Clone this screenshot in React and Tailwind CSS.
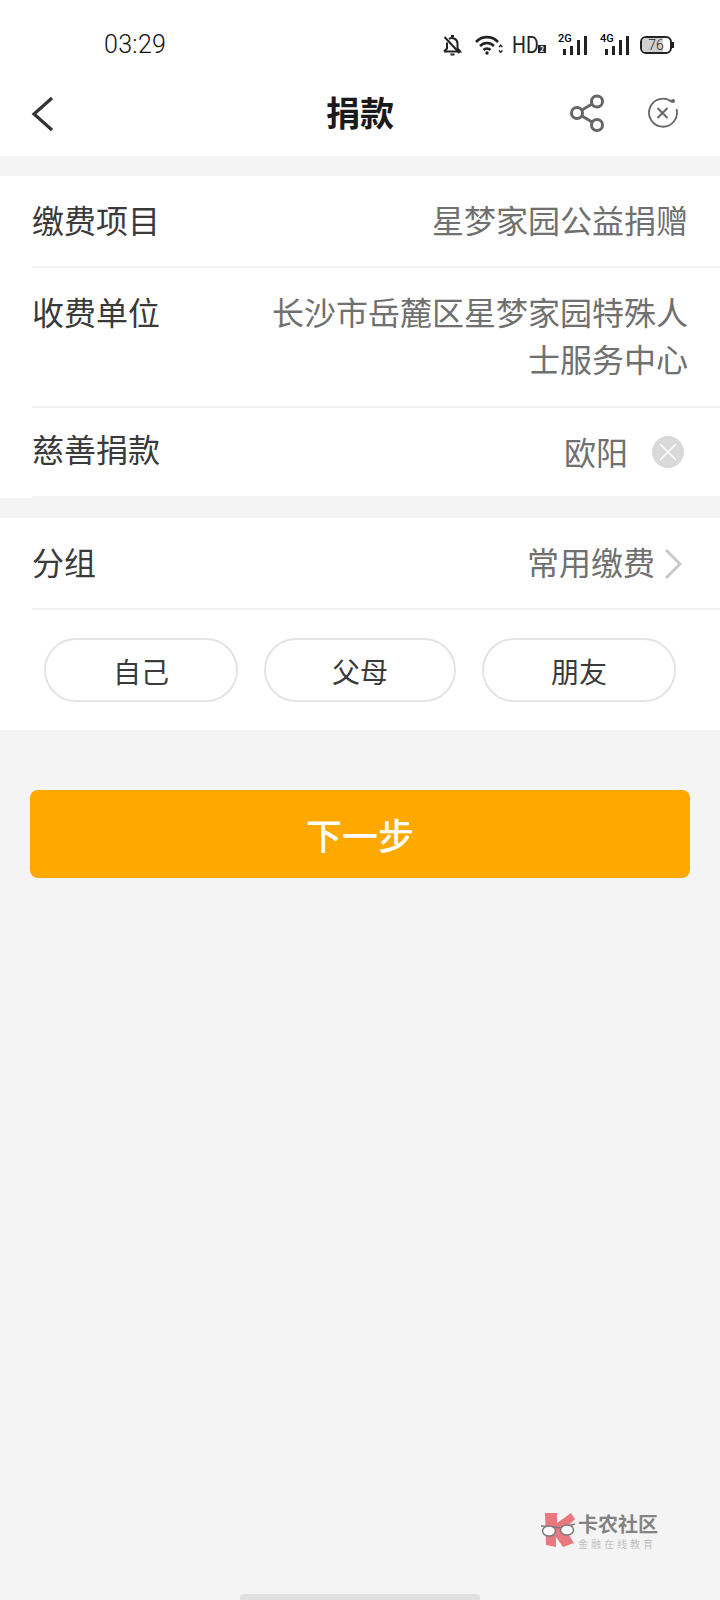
import React from 'react';

const cjk = { fontFamily: '"Noto Sans CJK SC", sans-serif' };

function Signal({ label }) {
  return (
    <div className="relative w-[30px] h-[20px]">
      <span className="absolute left-[1px] top-[-2px] text-[11px] leading-[12px] font-medium text-black font-['Roboto']">{label}</span>
      <div className="absolute left-[6px] bottom-0 flex items-end gap-[4px]">
        <div className="w-[3px] h-[6px] bg-[#222]" />
        <div className="w-[3px] h-[9px] bg-[#222]" />
        <div className="w-[3px] h-[15px] bg-[#222]" />
        <div className="w-[3px] h-[19px] bg-[#222]" />
      </div>
    </div>
  );
}

function StatusBar() {
  return (
    <div className="h-[72px] flex items-center pl-[104px] pr-[46px] justify-between pt-[18px]">
      <span className="text-[25px] font-light tracking-[0.3px] text-[#111] font-['Roboto']">03:29</span>
      <div className="flex items-center">
        {/* muted bell */}
        <svg width="19" height="21" viewBox="0 0 19 21" fill="none" stroke="#222" strokeWidth="2">
          <path d="M1 16.500h16l-2.500-3V8.500a5.500 5.500 0 0 0-8.500-4.500M4 7.500v6l-3 3" />
          <path d="M1.500 2l15 16" />
          <path d="M8 1h3M7.500 19.500h4" />
        </svg>
        {/* wifi */}
        <svg className="ml-[13px]" width="28" height="20" viewBox="0 0 28 20" fill="none" stroke="#222" strokeWidth="2.600">
          <path d="M1 7c6-6.500 16-6.500 22 0" />
          <path d="M5 11c4-4 10-4 14 0" />
          <path d="M8.500 15c2-2 5-2 7 0" />
          <circle cx="12" cy="18" r="1.700" fill="#222" stroke="none" />
          <path d="M24 12l1.700-1.700 1.700 1.700M24 15.500l1.700 1.700 1.700-1.700" strokeWidth="1.500" />
        </svg>
        <span className="ml-[9px] text-[23px] leading-none text-[#222] font-['Roboto'] w-[26px] inline-block scale-x-[0.85] origin-left">HD</span>
        <span className="w-[8px] h-[8px] bg-[#222] text-white text-[7px] leading-[8px] text-center font-bold mt-[8px] mr-[11px]">2</span>
        <Signal label="2G" />
        <div className="w-[12px]" />
        <Signal label="4G" />
        <div className="w-[11px]" />
        {/* battery */}
        <div className="flex items-center">
          <div className="relative w-[32px] h-[18px] rounded-[6px] border-2 border-[#222] overflow-hidden flex items-center justify-center">
            <div className="absolute left-0 top-0 bottom-0 w-[76%] bg-[#d0d0d0]" />
            <span className="relative text-[14px] font-light leading-none text-[#222] font-['Roboto']">76</span>
          </div>
          <div className="w-[2px] h-[6px] bg-[#222]" />
        </div>
      </div>
    </div>
  );
}

function NavBar() {
  return (
    <div className="h-[84px] relative flex items-center justify-center">
      <svg className="absolute left-[31px] top-[24px]" width="24" height="36" viewBox="0 0 24 36" fill="none" stroke="#333" strokeWidth="3.200">
        <path d="M21 2 L3 18 L21 34" />
      </svg>
      <span className="text-[34px] font-bold text-[#1a1a1a] leading-none mb-[4px]" style={cjk}>捐款</span>
      <svg className="absolute left-[568px] top-[22px]" width="38" height="38" viewBox="0 0 38 38" fill="none" stroke="#666" strokeWidth="3">
        <circle cx="9" cy="19" r="5.500" />
        <circle cx="29" cy="7.500" r="5.500" />
        <circle cx="29" cy="31" r="5.500" />
        <path d="M14 16 L24 10 M14 22 L24 28" />
      </svg>
      <svg className="absolute left-[647px] top-[24px]" width="32" height="34" viewBox="0 0 32 34" fill="none" stroke="#666" strokeWidth="1.800">
        <path d="M25 6 A14 14 0 1 0 29.500 13" />
        <path d="M10.500 12 L20.500 22 M20.500 12 L10.500 22" strokeWidth="2" />
        <circle cx="26" cy="5" r="2" fill="#666" stroke="none" />
      </svg>
    </div>
  );
}

function Row({ label, children, className }) {
  return (
    <div className={`ml-[32px] border-b-2 border-[#f2f2f2] flex justify-between ${className}`}>
      <span className="text-[32px] leading-[40px] text-[#3a3a3a]" style={cjk}>{label}</span>
      {children}
    </div>
  );
}

function Pill({ children }) {
  return (
    <div className="h-[64px] pt-[2px] rounded-full border-2 border-[#e4e4e4] flex items-center justify-center text-[28px] text-[#3a3a3a]" style={cjk}>
      {children}
    </div>
  );
}

function App() {
  return (
    <div className="w-[720px] h-[1600px] relative overflow-hidden bg-[#f4f4f4]" style={cjk}>
      <div className="bg-white">
        <StatusBar />
        <NavBar />
      </div>

      {/* Payment info */}
      <div className="mt-[20px] bg-white">
        <Row label="缴费项目" className="h-[92px] pt-[23px] pr-[32px]">
          <span className="text-[32px] leading-[40px] text-[#707070]">星梦家园公益捐赠</span>
        </Row>
        <Row label="收费单位" className="h-[140px] pt-[23px] pr-[32px]">
          <span className="w-[420px] -mt-[3px] text-right text-[32px] leading-[47px] text-[#707070]">长沙市岳麓区星梦家园特殊人士服务中心</span>
        </Row>
        <div className="h-[90px] ml-[32px] pr-[36px] flex justify-between pt-[20px] border-b-2 border-[#f4f4f4]">
          <span className="text-[32px] leading-[40px] text-[#3a3a3a]">慈善捐款</span>
          <div className="flex items-start">
            <span className="text-[32px] leading-[40px] text-[#707070] mt-[3px]">欧阳</span>
            <div className="ml-[24px] mt-[8px] w-[32px] h-[32px] rounded-full bg-[#d9d9d9] flex items-center justify-center">
              <svg width="18" height="18" viewBox="0 0 18 18" stroke="#fff" strokeWidth="1.300">
                <path d="M1 1 L17 17 M17 1 L1 17" />
              </svg>
            </div>
          </div>
        </div>
      </div>

      {/* Group */}
      <div className="mt-[20px] bg-white h-[212px]">
        <Row label="分组" className="h-[92px] pt-[23px] pr-[38px]">
          <div className="flex items-start">
            <span className="text-[32px] leading-[40px] text-[#707070]">常用缴费</span>
            <svg className="ml-[9px] mt-[7px]" width="18" height="32" viewBox="0 0 18 32" fill="none" stroke="#c8c8c8" strokeWidth="3">
              <path d="M2 2 L16 16 L2 30" />
            </svg>
          </div>
        </Row>
        <div className="grid grid-cols-[194px_192px_194px] gap-[26px] pl-[44px] pt-[28px]">
          <Pill>自己</Pill>
          <Pill>父母</Pill>
          <Pill>朋友</Pill>
        </div>
      </div>

      <div className="mx-[30px] mt-[60px] h-[88px] rounded-[8px] bg-[#ffa800] flex items-center justify-center text-[36px] font-medium text-white">
        下一步
      </div>

      {/* Watermark */}
      <div className="absolute left-[541px] top-[1511px] flex items-start opacity-85">
        <svg width="36" height="38" viewBox="0 0 36 38">
          <path d="M4 2 H16 V12 L30 2 L34 8 L24 18 L33 32 L22 36 L15 26 L15 36 L5 34 Z" fill="#e8636c" />
          <path d="M0 15 L14 16 L20 17 L34 13" fill="none" stroke="#666" strokeWidth="1.500" />
          <ellipse cx="8" cy="20" rx="6.500" ry="5" fill="#fff" stroke="#666" strokeWidth="1.500" />
          <ellipse cx="26" cy="19" rx="6.500" ry="5" fill="#fff" stroke="#666" strokeWidth="1.500" />
        </svg>
        <div className="ml-[1px] mt-[2px] flex flex-col">
          <div className="h-[22px] text-[20px] leading-[22px] font-bold text-[#707070] whitespace-nowrap">卡农社区</div>
          <div className="h-[14px] mt-[2px] text-[10px] leading-[14px] text-[#b8b8b8] tracking-[3px] whitespace-nowrap">金融在线教育</div>
        </div>
      </div>

      {/* Home indicator */}
      <div className="absolute left-[240px] top-[1594px] w-[240px] h-[6px] rounded-t-[3px] bg-[#e0e0e0]" />
    </div>
  );
}

export default App;
